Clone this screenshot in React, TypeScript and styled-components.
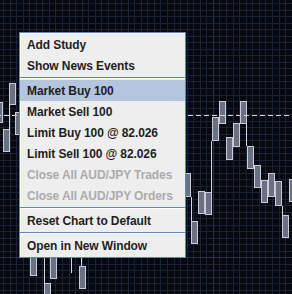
import React from "react";
import styled, { createGlobalStyle } from "styled-components";

const GlobalStyle = createGlobalStyle`
  html, body {
    margin: 0;
    padding: 0;
    background: #080910;
  }
`;

const Screen = styled.div`
  position: relative;
  width: 292px;
  height: 294px;
  overflow: hidden;
  background: #080910;
`;

const ChartCanvas = styled.svg`
  display: block;
`;

const PopupMenu = styled.div`
  position: absolute;
  left: 19px;
  top: 32px;
  width: 167px;
  box-sizing: border-box;
  border: 1px solid #6382bf;
  background: #eeeeee;
  box-shadow: inset 1px 1px 0 #ffffff;
  padding: 1px 0 1px 0;
  display: flex;
  flex-direction: column;
  font-family: "Liberation Sans", Arial, sans-serif;
`;

const MenuItem = styled.div<{ $selected?: boolean; $disabled?: boolean }>`
  height: 21px;
  line-height: 22px;
  padding-left: 7px;
  font-size: 12px;
  font-weight: bold;
  letter-spacing: -0.1px;
  white-space: nowrap;
  overflow: hidden;
  color: ${(p) => (p.$disabled ? "#ababab" : "#1e1e1e")};
  background: ${(p) => (p.$selected ? "#b5c5df" : "transparent")};
`;

const Separator = styled.div`
  height: 4px;
  background: linear-gradient(
    to bottom,
    transparent 1px,
    #6382bf 1px,
    #6382bf 2px,
    #ffffff 2px,
    #ffffff 3px,
    transparent 3px
  );
`;

type Bar = { x: number; y0: number; y1: number; w?: number };
type Wick = { x: number; y0: number; y1: number };

const bars: Bar[] = [
  // left of menu
  { x: -4, y0: 102, y1: 123 },
  { x: 3, y0: 129, y1: 152 },
  { x: 9, y0: 83, y1: 105 },
  { x: 15, y0: 112, y1: 135 },
  // below menu
  { x: 30, y0: 240, y1: 276 },
  { x: 44, y0: 283, y1: 300 },
  { x: 50, y0: 240, y1: 279 },
  { x: 79, y0: 266, y1: 289 },
  // right of menu
  { x: 184, y0: 173, y1: 197 },
  { x: 191, y0: 221, y1: 244 },
  { x: 198, y0: 191, y1: 214 },
  { x: 205, y0: 192, y1: 215 },
  { x: 212, y0: 117, y1: 141 },
  { x: 219, y0: 101, y1: 124 },
  { x: 226, y0: 137, y1: 160 },
  { x: 233, y0: 123, y1: 147 },
  { x: 240, y0: 101, y1: 124 },
  { x: 247, y0: 146, y1: 169 },
  { x: 254, y0: 165, y1: 188 },
  { x: 261, y0: 180, y1: 203 },
  { x: 268, y0: 173, y1: 197 },
  { x: 275, y0: 181, y1: 206 },
  { x: 282, y0: 215, y1: 238 },
  { x: 289, y0: 179, y1: 202 },
];

const wicks: Wick[] = [
  { x: 9, y0: 105, y1: 129 },
  { x: 44, y0: 250, y1: 294 },
  { x: 71, y0: 250, y1: 273 },
  { x: 81, y0: 250, y1: 266 },
  { x: 191, y0: 197, y1: 221 },
  { x: 211, y0: 141, y1: 192 },
  { x: 246, y0: 124, y1: 146 },
  { x: 282, y0: 206, y1: 215 },
];

const vLines = Array.from({ length: 46 }, (_, i) => Math.round(3 + 6.56 * i));
const hLines = Array.from({ length: 46 }, (_, j) => Math.round(3.3 + 6.516 * j));

function Chart() {
  return (
    <ChartCanvas width={292} height={294} viewBox="0 0 292 294" shapeRendering="crispEdges">
      <rect x={0} y={0} width={292} height={294} fill="#080910" />
      {vLines.map((x, i) => (
        <rect key={`v${i}`} x={x} y={0} width={1} height={294} fill={i === 32 ? "#2b3346" : "#1a2236"} />
      ))}
      {hLines.map((y, j) => (
        <rect key={`h${j}`} x={0} y={y} width={292} height={1} fill={j === 39 ? "#2b3346" : "#1a2236"} />
      ))}
      {wicks.map((w, i) => (
        <rect key={`w${i}`} x={w.x} y={w.y0} width={1} height={w.y1 - w.y0} fill="#d4d7de" />
      ))}
      {bars.map((b, i) => {
        const w = b.w ?? 7;
        return (
          <rect
            key={`b${i}`}
            x={b.x + 0.5}
            y={b.y0 + 0.5}
            width={w - 1}
            height={b.y1 - b.y0 - 1}
            fill="#6b7083"
            stroke="#c9cdd6"
            strokeWidth={1}
          />
        );
      })}
      <line
        x1={0}
        y1={115.5}
        x2={292}
        y2={115.5}
        stroke="#d0d4dc"
        strokeWidth={1}
        strokeDasharray="5 3"
        strokeDashoffset={4}
      />
    </ChartCanvas>
  );
}

type Entry = { label?: string; selected?: boolean; disabled?: boolean; separator?: boolean };

const entries: Entry[] = [
  { label: "Add Study" },
  { label: "Show News Events" },
  { separator: true },
  { label: "Market Buy 100", selected: true },
  { label: "Market Sell 100" },
  { label: "Limit Buy 100 @ 82.026" },
  { label: "Limit Sell 100 @ 82.026" },
  { label: "Close All AUD/JPY Trades", disabled: true },
  { label: "Close All AUD/JPY Orders", disabled: true },
  { separator: true },
  { label: "Reset Chart to Default" },
  { separator: true },
  { label: "Open in New Window" },
];

export default function App() {
  return (
    <>
      <GlobalStyle />
      <Screen>
        <Chart />
        <PopupMenu>
          {entries.map((e, i) =>
            e.separator ? (
              <Separator key={i} />
            ) : (
              <MenuItem key={i} $selected={e.selected} $disabled={e.disabled}>
                {e.label}
              </MenuItem>
            )
          )}
        </PopupMenu>
      </Screen>
    </>
  );
}
